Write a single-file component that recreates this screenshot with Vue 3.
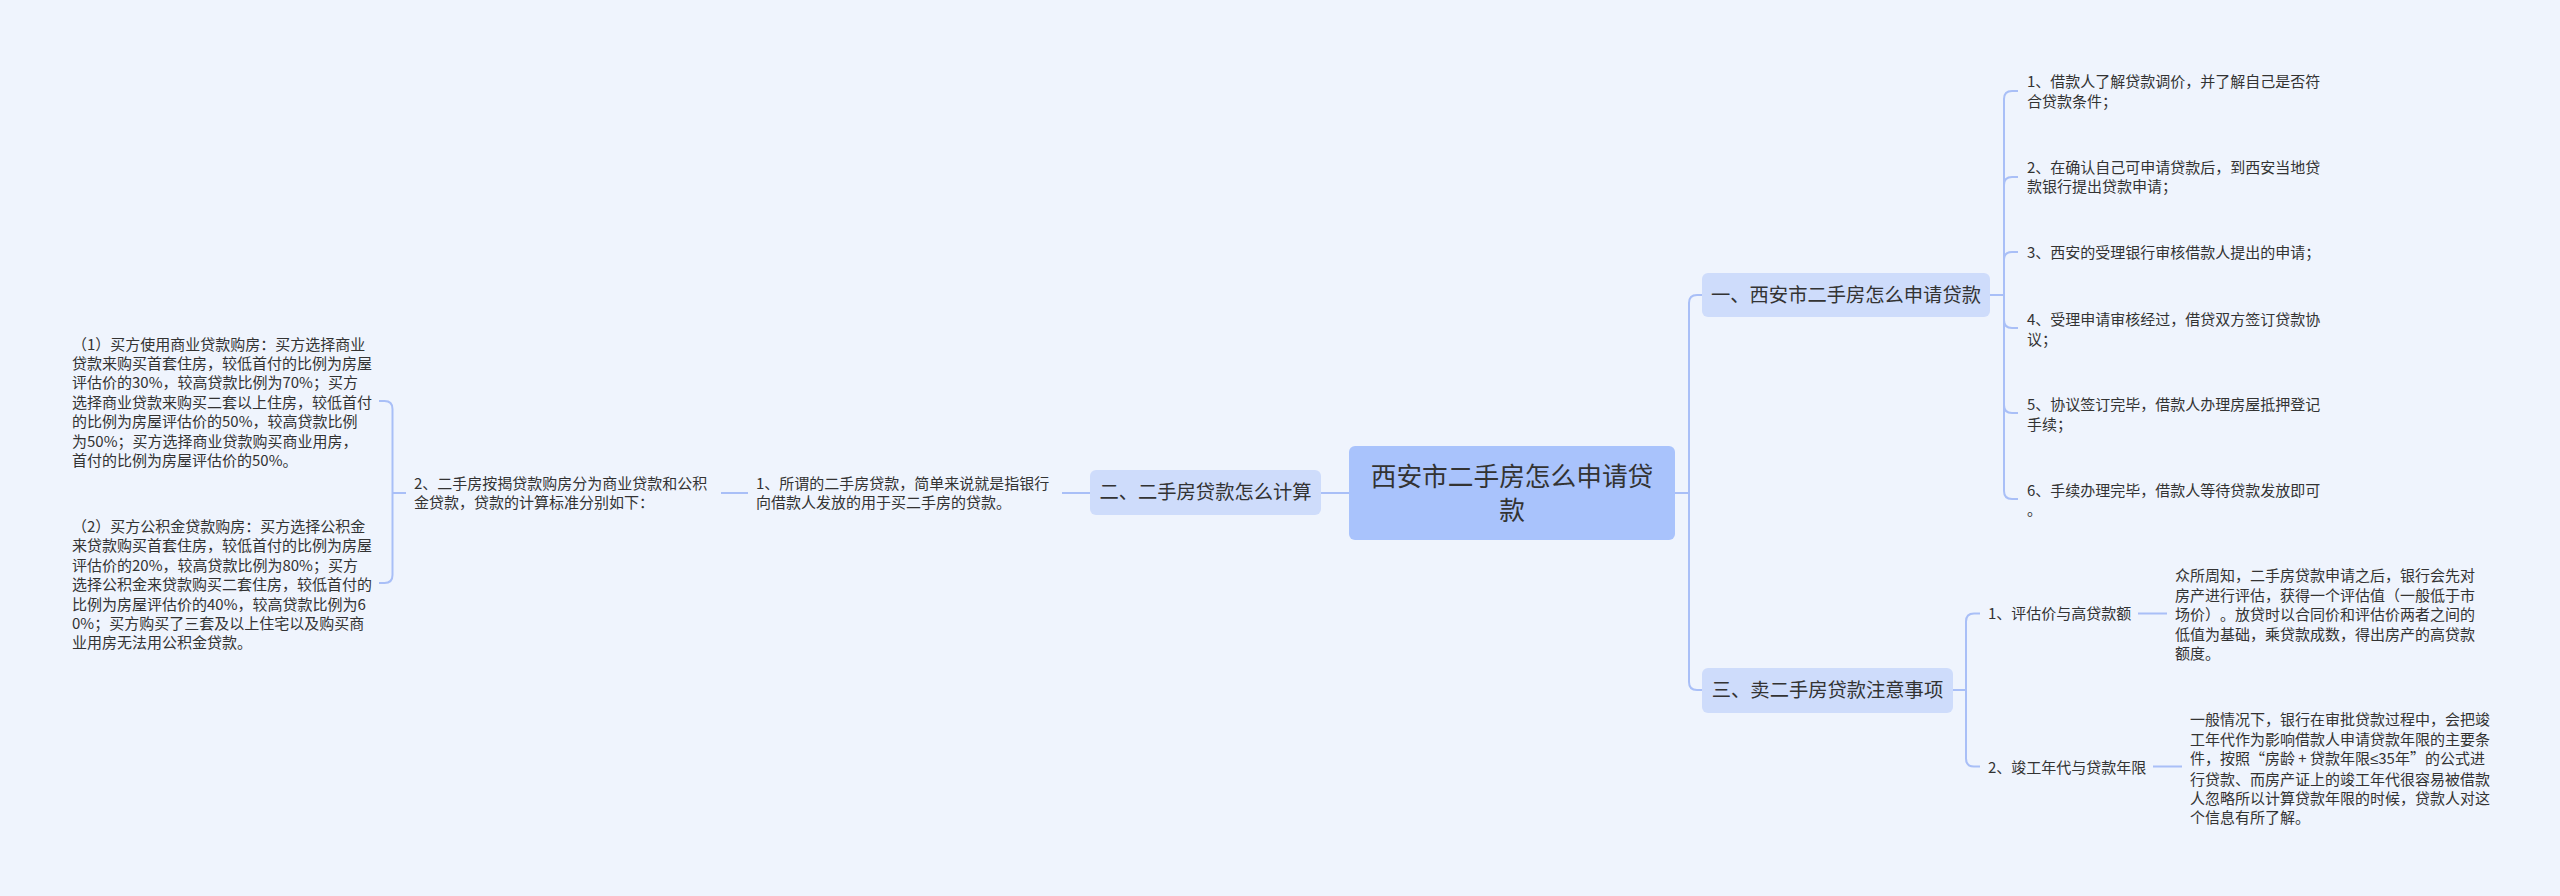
<script setup>
const LH = 19.4

const boxes = [
  { cls: 'root', x: 1349, y: 446, w: 326, h: 93.5, lines: ['西安市二手房怎么申请贷', '款'] },
  { cls: 'sub', x: 1702, y: 273, w: 288, h: 44, lines: ['一、西安市二手房怎么申请贷款'] },
  { cls: 'sub', x: 1702, y: 668, w: 251, h: 45, lines: ['三、卖二手房贷款注意事项'] },
  { cls: 'sub', x: 1090, y: 470, w: 231, h: 45, lines: ['二、二手房贷款怎么计算'] },
]

const texts = [
  { x: 2027, y: 81, lines: ['1、借款人了解贷款调价，并了解自己是否符', '合贷款条件；'] },
  { x: 2027, y: 166.7, lines: ['2、在确认自己可申请贷款后，到西安当地贷', '款银行提出贷款申请；'] },
  { x: 2027, y: 252, lines: ['3、西安的受理银行审核借款人提出的申请；'] },
  { x: 2027, y: 319, lines: ['4、受理申请审核经过，借贷双方签订贷款协', '议；'] },
  { x: 2027, y: 404, lines: ['5、协议签订完毕，借款人办理房屋抵押登记', '手续；'] },
  { x: 2027, y: 489.7, lines: ['6、手续办理完毕，借款人等待贷款发放即可', '。'] },
  { x: 1988, y: 613, lines: ['1、评估价与高贷款额'] },
  { x: 1988, y: 766.7, lines: ['2、竣工年代与贷款年限'] },
  { x: 2175, y: 575, lines: ['众所周知，二手房贷款申请之后，银行会先对', '房产进行评估，获得一个评估值（一般低于市', '场价）。放贷时以合同价和评估价两者之间的', '低值为基础，乘贷款成数，得出房产的高贷款', '额度。'] },
  { x: 2190, y: 719, lines: ['一般情况下，银行在审批贷款过程中，会把竣', '工年代作为影响借款人申请贷款年限的主要条', '件，按照“房龄 + 贷款年限≤35年”的公式进', '行贷款、而房产证上的竣工年代很容易被借款', '人忽略所以计算贷款年限的时候，贷款人对这', '个信息有所了解。'] },
  { x: 756, y: 482.3, lines: ['1、所谓的二手房贷款，简单来说就是指银行', '向借款人发放的用于买二手房的贷款。'] },
  { x: 414, y: 482.3, lines: ['2、二手房按揭贷款购房分为商业贷款和公积', '金贷款，贷款的计算标准分别如下：'] },
  { x: 72, y: 343.3, lines: ['（1）买方使用商业贷款购房：买方选择商业', '贷款来购买首套住房，较低首付的比例为房屋', '评估价的30%，较高贷款比例为70%；买方', '选择商业贷款来购买二套以上住房，较低首付', '的比例为房屋评估价的50%，较高贷款比例', '为50%；买方选择商业贷款购买商业用房，', '首付的比例为房屋评估价的50%。'] },
  { x: 72, y: 525.7, lines: ['（2）买方公积金贷款购房：买方选择公积金', '来贷款购买首套住房，较低首付的比例为房屋', '评估价的20%，较高贷款比例为80%；买方', '选择公积金来贷款购买二套住房，较低首付的', '比例为房屋评估价的40%，较高贷款比例为6', '0%；买方购买了三套及以上住宅以及购买商', '业用房无法用公积金贷款。'] },
]

// "≤" is half-width in the reference, so it is set apart to take a Latin face
const splitLine = (l) => l.split(/(≤)/).filter(Boolean)

// bracket from a parent stem to several children, rounded where it turns
function bracket(x0, xt, x1, y0, ys, r = 8) {
  const dir = Math.sign(x1 - xt)
  const out = [`M${x0} ${y0}H${xt}`]
  for (const y of ys) {
    const s = Math.sign(y - y0) || 1
    out.push(`M${xt} ${y0}V${y - s * r}Q${xt} ${y} ${xt + dir * r} ${y}H${x1}`)
  }
  return out.join('')
}

const paths = [
  bracket(1675, 1689, 1702, 493, [295, 690]),
  bracket(1990, 2004, 2018, 295, [91, 177, 252, 328, 413, 499]),
  bracket(1953, 1966, 1980, 690, [613.5, 766.5]),
  'M2138 613.5H2167',
  'M2153 766.5H2182',
  'M1062 493H1090',
  'M1321 493H1349',
  'M721 493H748',
  bracket(406, 392.5, 379, 493, [401, 583]),
]

const boxStyle = (b) => ({ left: b.x + 'px', top: b.y + 'px', width: b.w + 'px', height: b.h + 'px' })
const textStyle = (t) => ({ left: t.x + 'px', top: t.y - LH / 2 + 'px' })
</script>

<template>
  <div class="map">
    <svg class="links" width="2560" height="896" viewBox="0 0 2560 896">
      <path v-for="(d, i) in paths" :key="i" :d="d" />
    </svg>
    <div v-for="(b, i) in boxes" :key="'b' + i" class="box" :class="b.cls" :style="boxStyle(b)">
      <span v-for="(l, j) in b.lines" :key="j" class="box-line">{{ l }}</span>
    </div>
    <div v-for="(t, i) in texts" :key="'t' + i" class="leaf" :style="textStyle(t)">
      <div v-for="(l, j) in t.lines" :key="j">
        <template v-for="(p, k) in splitLine(l)" :key="k">
          <span v-if="p === '≤'" class="latin">{{ p }}</span>
          <template v-else>{{ p }}</template>
        </template>
      </div>
    </div>
  </div>
</template>

<style scoped>
.map {
  position: relative;
  width: 2560px;
  height: 896px;
  overflow: hidden;
  background: #eff4fd;
  font-family: "Noto Sans CJK SC", "Noto Sans", sans-serif;
  color: #333;
  text-spacing-trim: space-all;
}
.links {
  position: absolute;
  left: 0;
  top: 0;
}
.links path {
  fill: none;
  stroke: #a9bff7;
  stroke-width: 2;
}
.box {
  position: absolute;
  box-sizing: border-box;
  border-radius: 6px;
  display: flex;
  flex-direction: column;
  align-items: center;
  justify-content: center;
  white-space: nowrap;
}
.box-line {
  position: relative;
  top: -1px;
}
.root {
  background: #a9c3fc;
  font-size: 25.7px;
  line-height: 33.5px;
}
.sub {
  background: #cedcfb;
  font-size: 19.3px;
  line-height: 25px;
}
.leaf {
  position: absolute;
  font-size: 15px;
  line-height: 19.4px;
  white-space: nowrap;
}
.latin {
  font-family: "Noto Sans", sans-serif;
}
</style>

<style>
html, body {
  margin: 0;
  background: #eff4fd;
}
</style>
